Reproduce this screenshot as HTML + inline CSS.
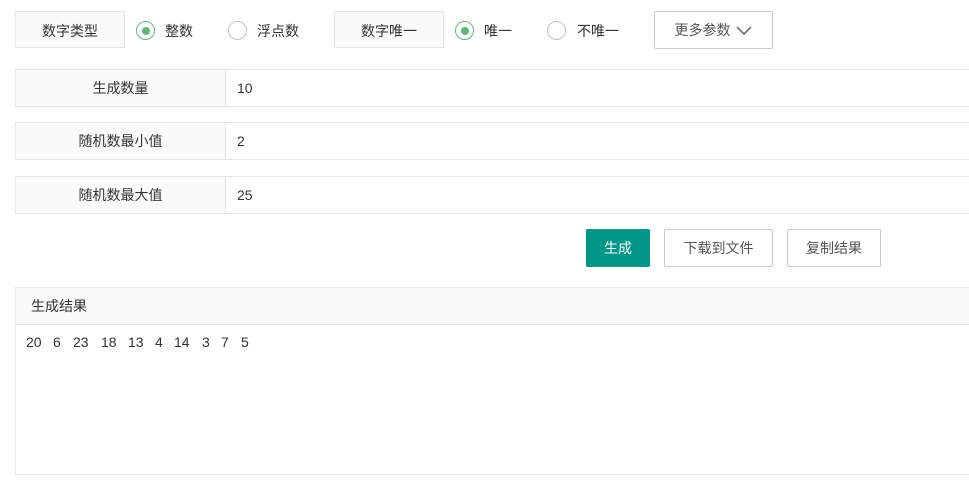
<!DOCTYPE html>
<html><head><meta charset="utf-8"><style>
*{box-sizing:border-box;margin:0;padding:0}
body{width:969px;height:484px;overflow:hidden;background:#fff;font-family:"Liberation Sans","Noto Sans CJK SC",sans-serif;font-size:14px;color:#333;position:relative}
.a{position:absolute}
.lab{position:absolute;background:#fafafa;border:1px solid #e6e6e6;text-align:center;line-height:35px;padding-top:2px;color:#333}
.radio{position:absolute;width:19px;height:19px;border:1px solid #c2c2c2;border-radius:50%}
.radio.on{border-color:#5FB878}
.radio.on::after{content:"";position:absolute;left:4.5px;top:4.5px;width:8px;height:8px;border-radius:50%;background:#5FB878}
.rt{position:absolute;line-height:20px;color:#333}
.row{position:absolute;left:15px;width:970px;height:38px;border:1px solid #e6e6e6}
.row .l{position:absolute;left:0;top:0;width:210px;height:36px;background:#fafafa;border-right:1px solid #e6e6e6;text-align:center;line-height:36px}
.row .v{position:absolute;left:221px;top:0;line-height:36px}
.btn{position:absolute;height:38px;border:1px solid #c9c9c9;border-radius:2px;text-align:center;line-height:36px;color:#555;background:#fff}
.n{position:absolute;top:333px;line-height:18px;color:#333}
</style></head><body>
<div class="lab" style="left:15px;top:11px;width:110px;height:37px">数字类型</div>
<div class="radio on" style="left:136px;top:21px"></div><div class="rt" style="left:165px;top:21px">整数</div>
<div class="radio" style="left:228px;top:21px"></div><div class="rt" style="left:257px;top:21px">浮点数</div>
<div class="lab" style="left:334px;top:11px;width:110px;height:37px">数字唯一</div>
<div class="radio on" style="left:455px;top:21px"></div><div class="rt" style="left:484px;top:21px">唯一</div>
<div class="radio" style="left:547px;top:21px"></div><div class="rt" style="left:577px;top:21px">不唯一</div>
<div class="btn" style="left:654px;top:11px;width:119px;height:38px">更多参数 <svg width="16" height="10" viewBox="0 0 16 10" style="vertical-align:middle;margin-left:2px"><path d="M1 1 L8 8 L15 1" fill="none" stroke="#555" stroke-width="1.4"/></svg></div>

<div class="row" style="top:69px"><div class="l">生成数量</div><div class="v">10</div></div>
<div class="row" style="top:122px"><div class="l">随机数最小值</div><div class="v">2</div></div>
<div class="row" style="top:176px"><div class="l">随机数最大值</div><div class="v">25</div></div>

<div class="btn" style="left:586px;top:229px;width:64px;background:#009688;border-color:#009688;color:#fff">生成</div>
<div class="btn" style="left:664px;top:229px;width:109px">下载到文件</div>
<div class="btn" style="left:787px;top:229px;width:94px">复制结果</div>

<div class="a" style="left:15px;top:287px;width:970px;height:188px;border:1px solid #e6e6e6">
<div style="height:37px;background:#f9f9f9;border-bottom:1px solid #e6e6e6;line-height:36px;padding-left:15px">生成结果</div>
</div>
<div class="n" style="left:26px">20</div><div class="n" style="left:53px">6</div><div class="n" style="left:73px">23</div><div class="n" style="left:101px">18</div><div class="n" style="left:128px">13</div><div class="n" style="left:155px">4</div><div class="n" style="left:174px">14</div><div class="n" style="left:202px">3</div><div class="n" style="left:221px">7</div><div class="n" style="left:241px">5</div>
</body></html>
